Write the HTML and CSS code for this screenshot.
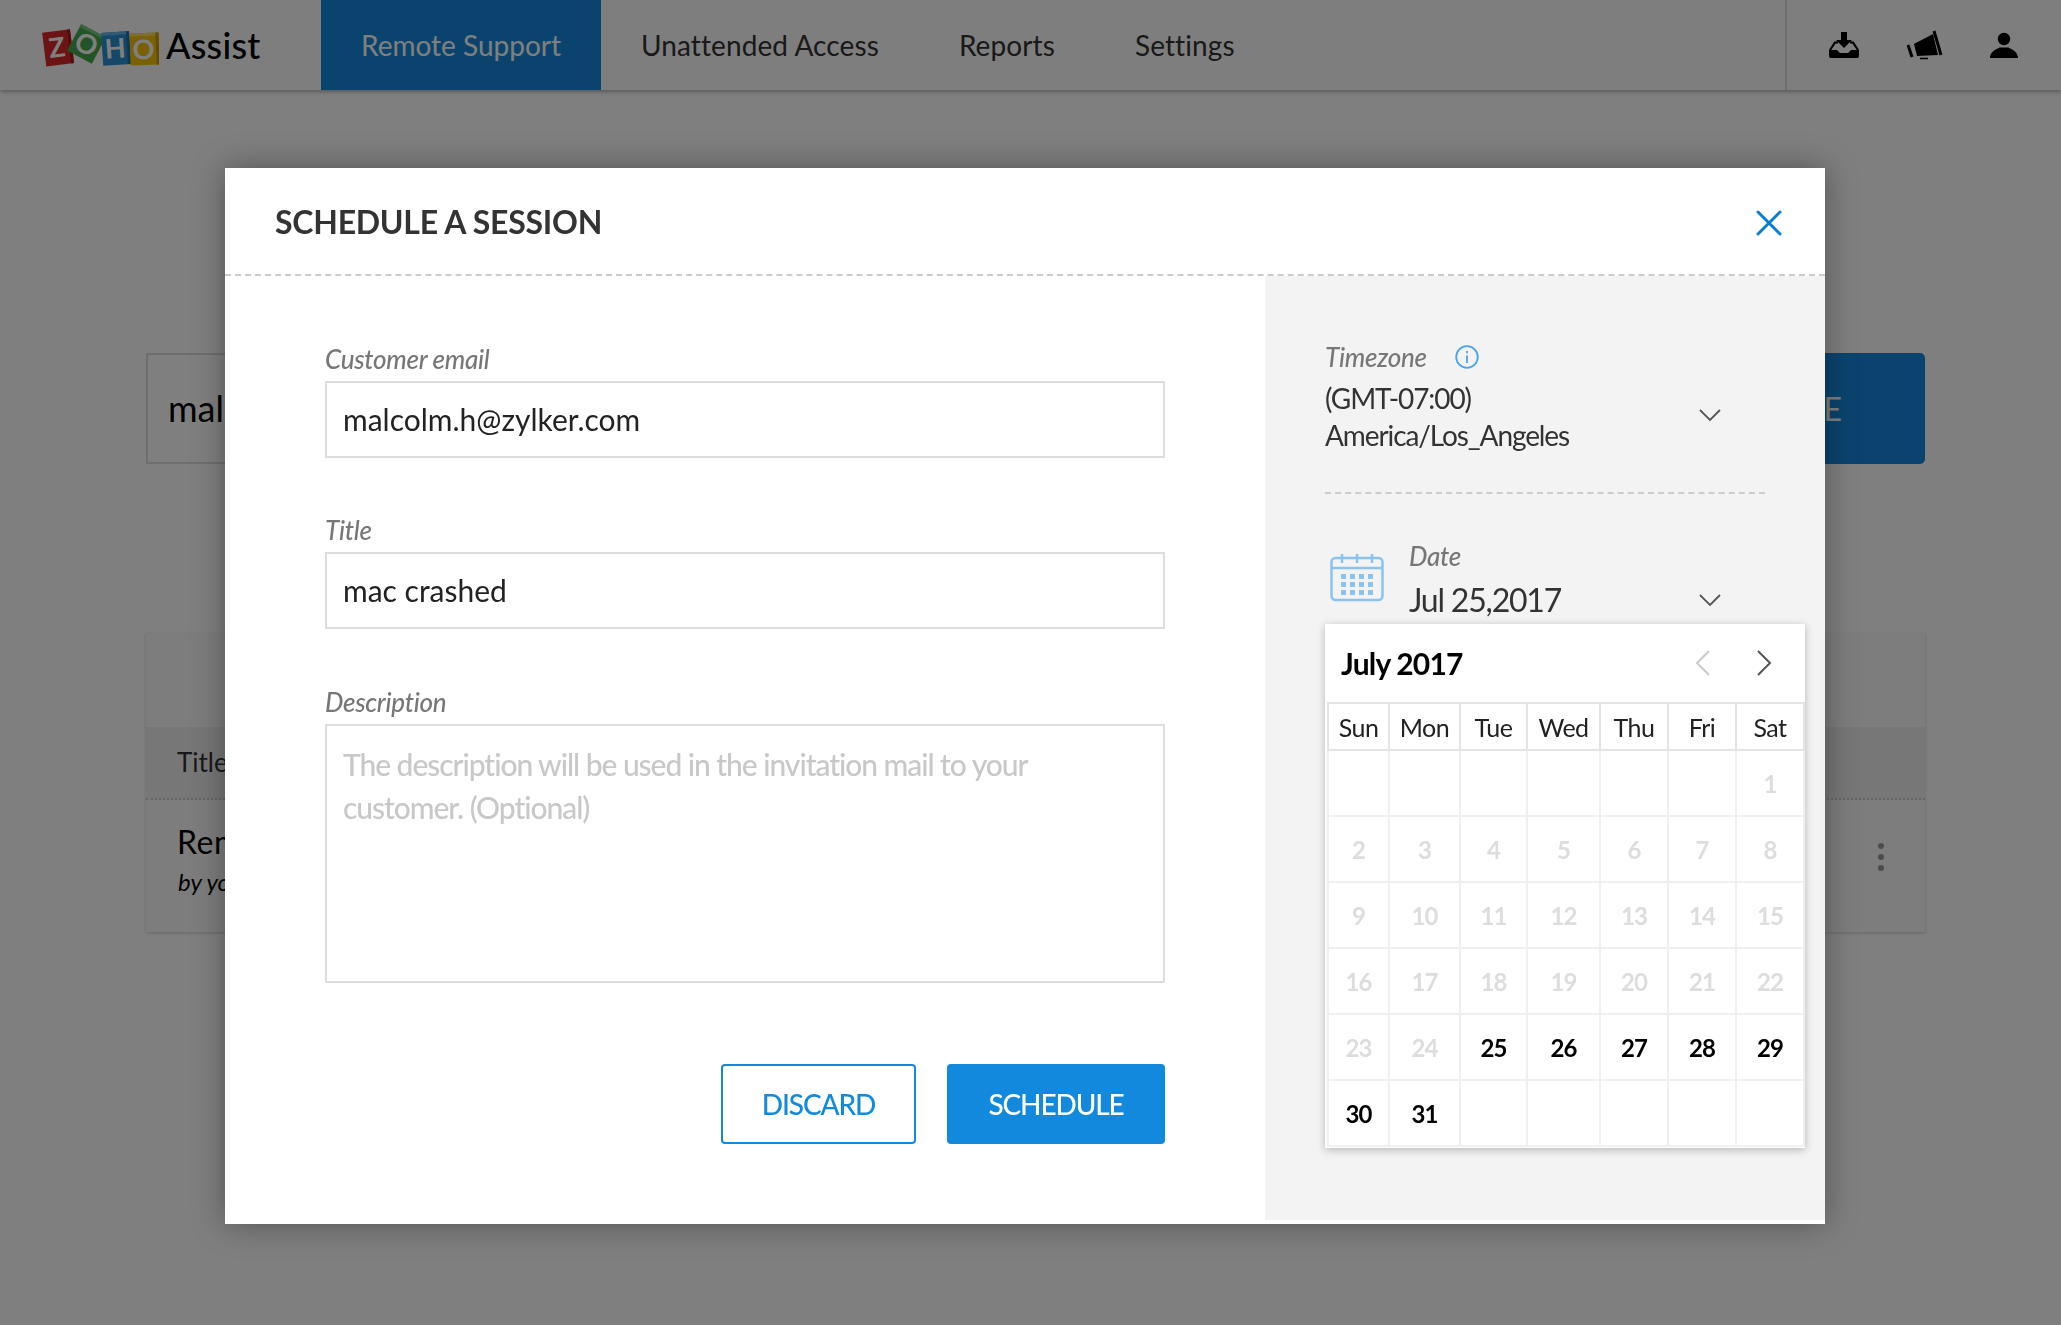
FILE: index.html
```html
<!DOCTYPE html>
<html lang="en">
<head>
    <meta charset="UTF-8">
    <title>Zoho Assist - Schedule a session</title>
    <link rel="stylesheet" href="styles.css">
</head>
<body>
    <!-- Page behind the dialog -->
    <div class="header">
        <div class="logo">
            <svg class="logo-mark" width="118" height="44" viewBox="0 0 118 44">
                <g transform="rotate(-7 16 24)"><rect x="3" y="8" width="28" height="34" fill="#d9282b"/><rect x="28" y="8" width="3" height="34" fill="#a81c1f"/><text x="16" y="34" class="logo-letter">Z</text></g>
                <g transform="rotate(28 46 20)"><rect x="32" y="6" width="28" height="30" fill="#46a84e"/><rect x="32" y="6" width="28" height="3" fill="#7cc783"/><text x="46" y="31" class="logo-letter">O</text></g>
                <g transform="rotate(-4 74 24)"><rect x="61" y="9" width="28" height="33" fill="#2a8fd0"/><rect x="61" y="9" width="28" height="3" fill="#66b4e6"/><rect x="86" y="9" width="3" height="33" fill="#1c6fa6"/><text x="74" y="35" class="logo-letter">H</text></g>
                <g transform="rotate(-2 103 25)"><rect x="89" y="10" width="29" height="32" fill="#f4c20d"/><rect x="89" y="10" width="29" height="3" fill="#fadc66"/><rect x="115" y="10" width="3" height="32" fill="#c79a08"/><text x="102.500" y="36" class="logo-letter">O</text></g>
            </svg>
            <span class="logo-name">Assist</span>
        </div>
        <div class="nav">
            <a class="nav-item active">Remote Support</a>
            <a class="nav-item">Unattended Access</a>
            <a class="nav-item">Reports</a>
            <a class="nav-item">Settings</a>
        </div>
        <div class="header-icons">
            <span class="header-icon">
                <svg width="30" height="26" viewBox="0 0 30 26">
                    <path d="M12 0h6v8h5l-8 8-8-8h5z"/>
                    <path d="M0 18h8l3 3h8l3-3h8v6a2 2 0 0 1-2 2H2a2 2 0 0 1-2-2z"/>
                    <path d="M1 18 6 10.500h3M29 18 24 10.500h-3" fill="none" stroke="#000" stroke-width="2.200"/>
                </svg>
            </span>
            <span class="header-icon">
                <svg width="37" height="30" viewBox="0 0 37 30">
                    <path d="M8 14 27 4l5 21-21 1z"/>
                    <path d="M2 15l4 12M28 1l7 24" fill="none" stroke="#000" stroke-width="3"/>
                    <path d="M14 28.500h8" fill="none" stroke="#000" stroke-width="1.500"/>
                </svg>
            </span>
            <span class="header-icon">
                <svg width="28" height="26" viewBox="0 0 28 26">
                    <circle cx="14" cy="7" r="6.200"/>
                    <path d="M0 26C0 20 5 18 9.500 15.500h9C23 18 28 20 28 26z"/>
                </svg>
            </span>
        </div>
    </div>

    <div class="content">
        <div class="start-row">
            <div class="start-input">malcolm</div>
            <div class="start-button">SCHEDULE</div>
        </div>
        <div class="session-card">
            <div class="card-top"></div>
            <div class="card-head">Title</div>
            <div class="card-row">
                <div class="row-text">
                    <div class="row-title">Remote support</div>
                    <div class="row-by">by you</div>
                </div>
                <div class="kebab"><i></i><i></i><i></i></div>
            </div>
        </div>
    </div>

    <div class="overlay"></div>

    <!-- Dialog -->
    <div class="modal">
        <div class="modal-header">
            <h1>SCHEDULE A SESSION</h1>
            <svg class="close" width="26" height="26" viewBox="0 0 26 26">
                <path d="M2 2l22 22M24 2 2 24"/>
            </svg>
        </div>
        <div class="modal-body">
            <div class="form">
                <div class="label">Customer email</div>
                <div class="field">malcolm.h@zylker.com</div>
                <div class="label">Title</div>
                <div class="field">mac crashed</div>
                <div class="label label-desc">Description</div>
                <div class="field area">The description will be used in the invitation mail to your customer. (Optional)</div>
                <div class="actions">
                    <div class="btn discard">DISCARD</div>
                    <div class="btn schedule">SCHEDULE</div>
                </div>
            </div>
            <div class="side">
                <div class="timezone">
                    <div class="tz-text">
                        <div class="label tz-label">Timezone
                            <svg class="info" width="24" height="24" viewBox="0 0 24 24">
                                <circle cx="12" cy="12" r="10.800"/>
                                <path d="M12 10.500v7.500M12 6v2.200"/>
                            </svg>
                        </div>
                        <div class="tz-value">(GMT-07:00)<br>America/Los_Angeles</div>
                    </div>
                    <svg class="chevron tz-chevron" width="22" height="13" viewBox="0 0 22 13"><path d="M1 1l10 10L21 1"/></svg>
                </div>
                <div class="date-row">
                    <svg class="cal-icon" width="54" height="49" viewBox="0 0 54 49">
                        <rect x="1.500" y="5" width="51" height="42" rx="4"/>
                        <path d="M1.500 15h51M12 1v9M27 1v9M42 1v9"/>
                        <g class="cal-dots">
                            <rect x="11" y="21" width="5" height="5"/><rect x="20" y="21" width="5" height="5"/><rect x="29" y="21" width="5" height="5"/><rect x="38" y="21" width="5" height="5"/>
                            <rect x="11" y="29" width="5" height="5"/><rect x="20" y="29" width="5" height="5"/><rect x="29" y="29" width="5" height="5"/><rect x="38" y="29" width="5" height="5"/>
                            <rect x="11" y="37" width="5" height="5"/><rect x="20" y="37" width="5" height="5"/><rect x="29" y="37" width="5" height="5"/><rect x="38" y="37" width="5" height="5"/>
                        </g>
                    </svg>
                    <div class="date-text">
                        <div class="label">Date</div>
                        <div class="date-value">Jul 25,2017</div>
                    </div>
                    <svg class="chevron date-chevron" width="22" height="13" viewBox="0 0 22 13"><path d="M1 1l10 10L21 1"/></svg>
                </div>
                <div class="calendar">
                    <div class="cal-head">
                        <span class="cal-month">July 2017</span>
                        <svg class="cal-arrow prev" width="17" height="28" viewBox="0 0 17 28"><path d="M15 2 3 14l12 12"/></svg>
                        <svg class="cal-arrow next" width="17" height="28" viewBox="0 0 17 28"><path d="M2 2l12 12L2 26"/></svg>
                    </div>
                    <table class="cal-table">
                        <colgroup>
                            <col class="c-sun"><col class="c-mon"><col class="c-tue"><col class="c-wed"><col class="c-thu"><col class="c-day"><col class="c-day">
                        </colgroup>
                        <thead>
                            <tr><th>Sun</th><th>Mon</th><th>Tue</th><th>Wed</th><th>Thu</th><th>Fri</th><th>Sat</th></tr>
                        </thead>
                        <tbody>
                            <tr><td></td><td></td><td></td><td></td><td></td><td></td><td>1</td></tr>
                            <tr><td>2</td><td>3</td><td>4</td><td>5</td><td>6</td><td>7</td><td>8</td></tr>
                            <tr><td>9</td><td>10</td><td>11</td><td>12</td><td>13</td><td>14</td><td>15</td></tr>
                            <tr><td>16</td><td>17</td><td>18</td><td>19</td><td>20</td><td>21</td><td>22</td></tr>
                            <tr><td>23</td><td>24</td><td class="open">25</td><td class="open">26</td><td class="open">27</td><td class="open">28</td><td class="open">29</td></tr>
                            <tr><td class="open">30</td><td class="open">31</td><td></td><td></td><td></td><td></td><td></td></tr>
                        </tbody>
                    </table>
                </div>
            </div>
        </div>
    </div>
</body>
</html>
```

FILE: styles.css
```css
* {
    box-sizing: border-box;
}

html, body {
    height: 100%;
}

body {
    margin: 0;
    font-family: Lato, "Open Sans", sans-serif;
    background-color: #ffffff;
    color: #333333;
    overflow: hidden;
}

/* Header */
.header {
    display: flex;
    height: 90px;
    background-color: #fcfcfc;
    box-shadow: 0 2px 4px rgba(0, 0, 0, 0.3);
}

.logo {
    display: flex;
    align-items: center;
    width: 321px;
    padding-left: 41px;
}

.logo-letter {
    font-family: Lato, sans-serif;
    font-size: 27px;
    font-weight: 700;
    fill: #ffffff;
    text-anchor: middle;
}

.logo-name {
    margin-left: 7px;
    font-size: 36px;
    font-weight: 500;
    letter-spacing: 0.2px;
    color: #000000;
}

.nav {
    display: flex;
    flex: 1;
}

.nav-item {
    display: flex;
    align-items: center;
    padding: 0 40px;
    font-size: 28px;
    letter-spacing: 0.1px;
    color: #333333;
}

.nav-item.active {
    background-color: #1589dc;
    color: #ffffff;
    letter-spacing: 0;
}

.header-icons {
    display: flex;
    align-items: center;
    height: 90px;
    padding: 0 17px;
    border-left: 2px solid #dddddd;
}

.header-icon {
    display: flex;
    justify-content: center;
    width: 80px;
}

/* Content behind the dialog */
.content {
    padding: 263px 136px 0 146px;
}

.start-row {
    display: flex;
    height: 111px;
}

.start-input {
    flex: 1;
    padding: 0 20px;
    border: 2px solid #dddddd;
    font-size: 36px;
    line-height: 107px;
    color: #000000;
}

.start-button {
    width: 400px;
    padding-right: 83px;
    border-radius: 0 5px 5px 0;
    background-color: #1589dc;
    color: #ffffff;
    font-size: 32px;
    line-height: 111px;
    text-align: right;
}

.session-card {
    margin-top: 169px;
    background-color: #fbfbfb;
    box-shadow: 0 1px 3px rgba(0, 0, 0, 0.2);
}

.card-top {
    height: 94px;
}

.card-head {
    height: 73px;
    padding-left: 31px;
    border-bottom: 2px dotted #cccccc;
    background-color: #eeeeee;
    font-size: 26px;
    line-height: 71px;
}

.card-row {
    display: flex;
    justify-content: space-between;
    align-items: center;
    height: 132px;
    padding: 0 41px 14px 31px;
}

.row-title {
    font-size: 32px;
    letter-spacing: 0.6px;
    color: #000000;
}

.row-by {
    margin-top: 6px;
    padding-left: 1px;
    font-size: 24px;
    font-style: italic;
    color: #000000;
}

.kebab {
    display: flex;
    flex-direction: column;
    gap: 5px;
    margin-top: -4px;
}

.kebab i {
    width: 6px;
    height: 6px;
    border-radius: 50%;
    background-color: #999999;
}

.overlay {
    position: fixed;
    top: 0;
    left: 0;
    right: 0;
    bottom: 0;
    background-color: rgba(0, 0, 0, 0.5);
}

/* Dialog */
.modal {
    position: absolute;
    top: 168px;
    left: 225px;
    width: 1600px;
    height: 1056px;
    background-color: #ffffff;
    box-shadow: 0 0 30px rgba(0, 0, 0, 0.35);
}

.modal-header {
    display: flex;
    justify-content: space-between;
    align-items: center;
    height: 108px;
    padding: 0 43px 0 50px;
    border-bottom: 2px dashed #cccccc;
}

.modal-header h1 {
    margin: 0;
    font-size: 32px;
    font-weight: 700;
    letter-spacing: -0.25px;
    color: #333333;
}

.close {
    margin-top: 3px;
}

.close path {
    fill: none;
    stroke: #0a7fd0;
    stroke-width: 3;
    stroke-linecap: round;
}

.modal-body {
    display: flex;
    height: 944px;
}

.form {
    width: 1040px;
    padding: 67px 100px 0;
}

.label {
    height: 32px;
    margin-bottom: 6px;
    font-size: 26px;
    font-weight: 500;
    font-style: italic;
    letter-spacing: -0.3px;
    line-height: 32px;
    color: #777777;
}

.label-desc {
    margin-top: 57px;
}

.field {
    height: 77px;
    margin-bottom: 56px;
    padding: 0 16px;
    border: 2px solid #dddddd;
    font-size: 30px;
    line-height: 73px;
    color: #222222;
}

.field.area {
    height: 259px;
    margin-bottom: 81px;
    padding-top: 17px;
    padding-right: 100px;
    font-weight: 500;
    letter-spacing: -1.050px;
    line-height: 43px;
    color: #c8c8c8;
}

.actions {
    display: flex;
    justify-content: flex-end;
    gap: 31px;
}

.btn {
    height: 80px;
    border-radius: 4px;
    font-size: 28px;
    font-weight: 500;
    letter-spacing: -1.100px;
    line-height: 76px;
    text-align: center;
}

.btn.discard {
    width: 195px;
    border: 2px solid #1289dc;
    color: #1289dc;
}

.btn.schedule {
    width: 218px;
    border: 2px solid #1289dc;
    background-color: #1289dc;
    color: #ffffff;
}

/* Right panel */
.side {
    width: 560px;
    padding: 66px 20px 0 60px;
    background-color: #f3f3f3;
}

.timezone {
    display: flex;
    align-items: center;
    width: 440px;
    height: 152px;
    padding-bottom: 40px;
    border-bottom: 2px dashed #cccccc;
}

.tz-text {
    flex: 1;
}

.tz-label {
    display: flex;
    align-items: center;
    gap: 28px;
}

.info circle, .info path {
    fill: none;
    stroke: #4aa3ef;
    stroke-width: 1.800;
}

.tz-value {
    padding-top: 1px;
    font-size: 28px;
    letter-spacing: -1.100px;
    line-height: 37px;
}

.chevron {
    margin-right: 44px;
}

.tz-chevron {
    margin-top: 37px;
}

.chevron path {
    fill: none;
    stroke: #555555;
    stroke-width: 1.800;
}

.date-row {
    display: flex;
    width: 440px;
    margin-top: 46px;
}

.cal-icon {
    margin: 13px 25px 0 5px;
}

.cal-icon rect, .cal-icon path {
    fill: none;
    stroke: #8cc3ee;
    stroke-width: 2.500;
}

.cal-icon .cal-dots rect {
    fill: #8cc3ee;
    stroke: none;
}

.date-text {
    flex: 1;
}

.date-text .label {
    margin-bottom: 8px;
}

.date-value {
    font-size: 32px;
    letter-spacing: -1.200px;
    line-height: 40px;
}

.date-chevron {
    margin-top: 54px;
}

.calendar {
    width: 480px;
    margin-top: 4px;
    padding: 0 2px 1px;
    background-color: #ffffff;
    box-shadow: 0 2px 8px rgba(0, 0, 0, 0.25);
}

.cal-head {
    display: flex;
    align-items: center;
    height: 78px;
    padding: 0 30px 0 14px;
}

.cal-month {
    flex: 1;
    font-size: 30px;
    font-weight: 700;
    letter-spacing: -0.8px;
    color: #000000;
}

.cal-arrow {
    margin-left: 45px;
}

.cal-arrow path {
    fill: none;
    stroke-width: 2;
}

.cal-arrow.prev path {
    stroke: #cccccc;
}

.cal-arrow.next path {
    stroke: #555555;
}

.cal-table {
    width: 476px;
    table-layout: fixed;
    border-collapse: collapse;
}

.c-sun {
    width: 61px;
}

.c-mon {
    width: 71px;
}

.c-tue {
    width: 67px;
}

.c-wed {
    width: 73px;
}

.c-thu {
    width: 68px;
}

.c-day {
    width: 68px;
}

.cal-table th {
    height: 47px;
    padding: 0;
    border: 2px solid #e4e4e4;
    font-size: 25px;
    font-weight: 400;
    letter-spacing: -0.5px;
    color: #222222;
}

.cal-table td {
    height: 66px;
    padding: 0;
    border: 2px solid #f0f0f0;
    font-size: 24px;
    font-weight: 700;
    letter-spacing: -0.8px;
    text-align: center;
    color: #dddddd;
}

.cal-table td.open {
    color: #000000;
}
```
